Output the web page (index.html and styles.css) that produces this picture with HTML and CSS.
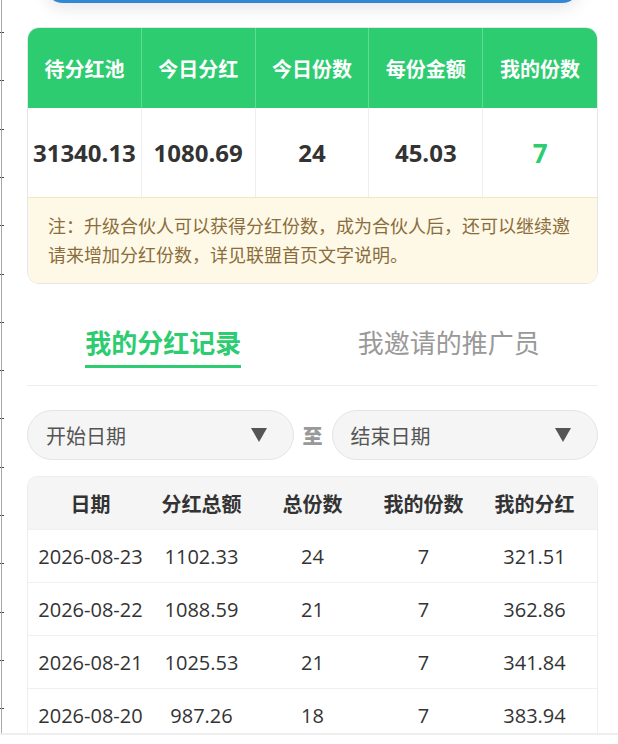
FILE: index.html
```html
<!DOCTYPE html>
<html lang="zh-CN">
<head>
<meta charset="utf-8">
<title>分红记录</title>
<link rel="stylesheet" href="styles.css">
</head>
<body>
<div class="ruler"></div>
<div class="screen">
  <div class="hero"></div>

  <section class="stats">
    <div class="stats-grid">
      <div class="sh">待分红池</div>
      <div class="sh">今日分红</div>
      <div class="sh">今日份数</div>
      <div class="sh">每份金额</div>
      <div class="sh">我的份数</div>
      <div class="sv">31340.13</div>
      <div class="sv">1080.69</div>
      <div class="sv">24</div>
      <div class="sv">45.03</div>
      <div class="sv sv-green">7</div>
    </div>
    <div class="note">注：升级合伙人可以获得分红份数，成为合伙人后，还可以继续邀请来增加分红份数，详见联盟首页文字说明。</div>
  </section>

  <nav class="tabs">
    <div class="tab tab-active">我的分红记录</div>
    <div class="tab">我邀请的推广员</div>
  </nav>

  <div class="filters">
    <div class="picker">
      <span class="picker-text">开始日期</span>
      <svg class="caret" width="16" height="14" viewBox="0 0 16 14"><polygon points="0,0 16,0 8,14" fill="#555"/></svg>
    </div>
    <span class="to">至</span>
    <div class="picker">
      <span class="picker-text">结束日期</span>
      <svg class="caret" width="16" height="14" viewBox="0 0 16 14"><polygon points="0,0 16,0 8,14" fill="#555"/></svg>
    </div>
  </div>

  <div class="records">
    <div class="row row-head">
      <div>日期</div><div>分红总额</div><div>总份数</div><div>我的份数</div><div>我的分红</div>
    </div>
    <div class="row">
      <div>2026-08-23</div><div>1102.33</div><div>24</div><div>7</div><div>321.51</div>
    </div>
    <div class="row">
      <div>2026-08-22</div><div>1088.59</div><div>21</div><div>7</div><div>362.86</div>
    </div>
    <div class="row">
      <div>2026-08-21</div><div>1025.53</div><div>21</div><div>7</div><div>341.84</div>
    </div>
    <div class="row">
      <div>2026-08-20</div><div>987.26</div><div>18</div><div>7</div><div>383.94</div>
    </div>
  </div>
</div>
</body>
</html>
```

FILE: styles.css
```css
html, body {
  margin: 0;
  padding: 0;
  background: #fff;
}

body {
  font-family: "Open Sans", "Noto Sans CJK SC", sans-serif;
  color: #333;
  position: relative;
}

.ruler {
  position: absolute;
  left: 0;
  top: 0;
  width: 4px;
  height: 733px;
  background:
    linear-gradient(to right, transparent 1px, #a8a8a8 1px, #a8a8a8 2px, transparent 2px),
    repeating-linear-gradient(to bottom, transparent 0, transparent 32px, #444 32px, #444 33px, transparent 33px, transparent 48.3px);
  z-index: 2;
}

.screen {
  height: 735px;
  box-sizing: border-box;
  overflow: hidden;
  border-bottom: 2px solid #eeeeee;
  padding: 0 20px 0 27px;
}

.hero {
  height: 40px;
  margin: -37px 18px 0 18px;
  border-radius: 18px;
  background: #2f87d6;
  box-shadow: 0 6px 16px rgba(0, 0, 0, 0.09);
}

.stats {
  margin-top: 24px;
  border: 1px solid #e6e6e6;
  border-radius: 12px;
  overflow: hidden;
  background: #fff;
}

.stats-grid {
  display: grid;
  grid-template-columns: repeat(5, 1fr);
}

.sh {
  height: 80px;
  display: flex;
  align-items: center;
  justify-content: center;
  background: #2ecc71;
  color: #fff;
  font-size: 20px;
  font-weight: 700;
  border-right: 1px solid rgba(255, 255, 255, 0.25);
}

.sv {
  height: 89px;
  display: flex;
  align-items: center;
  justify-content: center;
  font-size: 24px;
  font-weight: 700;
  color: #333;
  border-right: 1px solid #eeeeee;
}

.sh:nth-child(5), .sv:nth-child(10) {
  border-right: none;
}

.sv-green {
  color: #2ecc71;
  font-size: 26px;
}

.note {
  background: #fef9e7;
  border-top: 1px solid #f6e7b9;
  color: #8a6d3b;
  font-size: 18px;
  line-height: 29px;
  padding: 14px 20px 13px;
}

.tabs {
  margin-top: 20px;
  display: flex;
  justify-content: space-around;
  padding: 21px 0 17px;
  border-bottom: 1px solid #eeeeee;
}

.tab {
  font-size: 26px;
  line-height: 36px;
  color: #999;
  padding-bottom: 4px;
  border-bottom: 3px solid transparent;
}

.tab-active {
  color: #2ecc71;
  font-weight: 700;
  border-bottom-color: #2ecc71;
}

.filters {
  margin-top: 24px;
  display: flex;
  align-items: center;
  gap: 9px;
}

.picker {
  flex: 1;
  height: 50px;
  box-sizing: border-box;
  border: 1px solid #e4e4e4;
  border-radius: 25px;
  background: #f5f5f5;
  display: flex;
  align-items: center;
  justify-content: space-between;
  padding: 0 26px 0 18px;
}

.picker-text {
  font-size: 20px;
  color: #555;
}

.caret {
  display: block;
}

.to {
  font-size: 20px;
  font-weight: 900;
  color: #999;
}

.records {
  margin-top: 16px;
  border: 1px solid #eeeeee;
  border-radius: 10px;
  overflow: hidden;
}

.row {
  display: grid;
  grid-template-columns: repeat(5, 1fr);
  padding: 0 7px;
  height: 53px;
  align-items: center;
  text-align: center;
  font-size: 20px;
  color: #333;
  border-top: 1px solid #f0f0f0;
  box-sizing: border-box;
}

.row-head {
  height: 52px;
  border-top: none;
  background: #f5f5f5;
  font-weight: 700;
}
```
